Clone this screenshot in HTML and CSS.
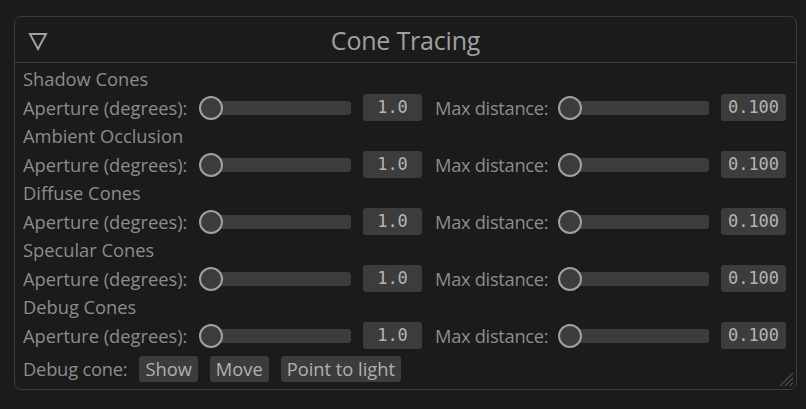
FILE: index.html
```html
<!DOCTYPE html>
<html>
<head>
<meta charset="utf-8">
<link rel="stylesheet" href="styles.css">
</head>
<body>
<div class="window">
  <div class="titlebar">
    <svg class="collapse" width="20" height="19" viewBox="0 0 20 19"><polygon points="2,2 18,2 10,17" fill="none" stroke="#a0a0a0" stroke-width="2" stroke-linejoin="miter"/></svg>
    <div class="title">Cone Tracing</div>
  </div>
  <div class="content">
    <div class="section">Shadow Cones</div>
    <div class="srow">
      <span class="lbl">Aperture (degrees):</span>
      <div class="slider"><div class="rail"></div><div class="knob"></div></div>
      <div class="val val-a">1.0</div>
      <span class="lbl lbl-b">Max distance:</span>
      <div class="slider"><div class="rail"></div><div class="knob"></div></div>
      <div class="val val-b">0.100</div>
    </div>
    <div class="section">Ambient Occlusion</div>
    <div class="srow">
      <span class="lbl">Aperture (degrees):</span>
      <div class="slider"><div class="rail"></div><div class="knob"></div></div>
      <div class="val val-a">1.0</div>
      <span class="lbl lbl-b">Max distance:</span>
      <div class="slider"><div class="rail"></div><div class="knob"></div></div>
      <div class="val val-b">0.100</div>
    </div>
    <div class="section">Diffuse Cones</div>
    <div class="srow">
      <span class="lbl">Aperture (degrees):</span>
      <div class="slider"><div class="rail"></div><div class="knob"></div></div>
      <div class="val val-a">1.0</div>
      <span class="lbl lbl-b">Max distance:</span>
      <div class="slider"><div class="rail"></div><div class="knob"></div></div>
      <div class="val val-b">0.100</div>
    </div>
    <div class="section">Specular Cones</div>
    <div class="srow">
      <span class="lbl">Aperture (degrees):</span>
      <div class="slider"><div class="rail"></div><div class="knob"></div></div>
      <div class="val val-a">1.0</div>
      <span class="lbl lbl-b">Max distance:</span>
      <div class="slider"><div class="rail"></div><div class="knob"></div></div>
      <div class="val val-b">0.100</div>
    </div>
    <div class="section">Debug Cones</div>
    <div class="srow">
      <span class="lbl">Aperture (degrees):</span>
      <div class="slider"><div class="rail"></div><div class="knob"></div></div>
      <div class="val val-a">1.0</div>
      <span class="lbl lbl-b">Max distance:</span>
      <div class="slider"><div class="rail"></div><div class="knob"></div></div>
      <div class="val val-b">0.100</div>
    </div>
    <div class="brow">
      <span class="lbl">Debug cone:</span>
      <button class="btn">Show</button>
      <button class="btn">Move</button>
      <button class="btn">Point to light</button>
    </div>
  </div>
  <svg class="grip" width="16" height="16" viewBox="0 0 16 16"><g stroke="#4a4a4a" stroke-width="1.3"><line x1="15" y1="2" x2="2" y2="15"/><line x1="15" y1="7" x2="7" y2="15"/><line x1="15" y1="11.5" x2="11.5" y2="15"/></g></svg>
</div>
</body>
</html>
```
FILE: styles.css
```css
html, body {
  margin: 0;
  padding: 0;
  background: #1b1b1b;
}
body {
  width: 806px;
  height: 409px;
  overflow: hidden;
  font-family: "Open Sans", "Noto Sans", sans-serif;
  color: #8c8c8c;
}
.window {
  position: relative;
  box-sizing: border-box;
  margin: 16px 0 0 14px;
  width: 783px;
  height: 374px;
  border: 1px solid #3c3c3c;
  border-radius: 7px;
  background: #1b1b1b;
}
.titlebar {
  position: relative;
  height: 45px;
  border-bottom: 1px solid #3c3c3c;
  display: flex;
  align-items: center;
  justify-content: center;
}
.collapse {
  position: absolute;
  left: 13px;
  top: 15px;
}
.title {
  font-size: 25px;
  color: #a0a0a0;
  letter-spacing: -0.2px;
}
.content {
  padding: 4px 0 0 8px;
  display: flex;
  flex-direction: column;
  gap: 3px;
}
.section {
  height: 24px;
  line-height: 24px;
  font-size: 18.3px;
}
.lbl {
  font-size: 18.3px;
  white-space: nowrap;
  line-height: 24px;
}
.lbl-b {
  letter-spacing: -0.3px;
}
.srow {
  height: 27px;
  display: grid;
  grid-template-columns: 176px 152px 71px 136px 151px 77px;
  align-items: center;
}
.val-a { margin-left: 12px; }
.lbl-b { margin-left: 13px; }
.val-b { margin-left: 12px; }
.slider {
  position: relative;
  height: 24px;
}
.rail {
  position: absolute;
  left: 4px;
  right: 0;
  top: 5px;
  height: 14px;
  border-radius: 3px;
  background: #3c3c3c;
}
.knob {
  position: absolute;
  left: 0;
  top: 0;
  box-sizing: border-box;
  width: 24px;
  height: 24px;
  border-radius: 50%;
  border: 2px solid #a0a0a0;
  background: #3c3c3c;
}
.val {
  box-sizing: border-box;
  height: 27px;
  border-radius: 3px;
  background: #3c3c3c;
  color: #b4b4b4;
  font-family: "DejaVu Sans Mono", monospace;
  font-size: 17px;
  line-height: 27px;
  text-align: center;
}
.brow {
  margin-top: 4px;
  height: 26px;
  display: flex;
  align-items: center;
}
.brow .lbl {
  margin-right: 12px;
  letter-spacing: -0.2px;
}
.btn {
  height: 26px;
  margin-right: 12px;
  padding: 0 6px;
  border: none;
  border-radius: 3px;
  background: #3c3c3c;
  color: #b0b0b0;
  font-family: "Open Sans", "Noto Sans", sans-serif;
  font-size: 18.3px;
  line-height: 26px;
}
.grip {
  position: absolute;
  right: 2px;
  bottom: 2px;
}
```
